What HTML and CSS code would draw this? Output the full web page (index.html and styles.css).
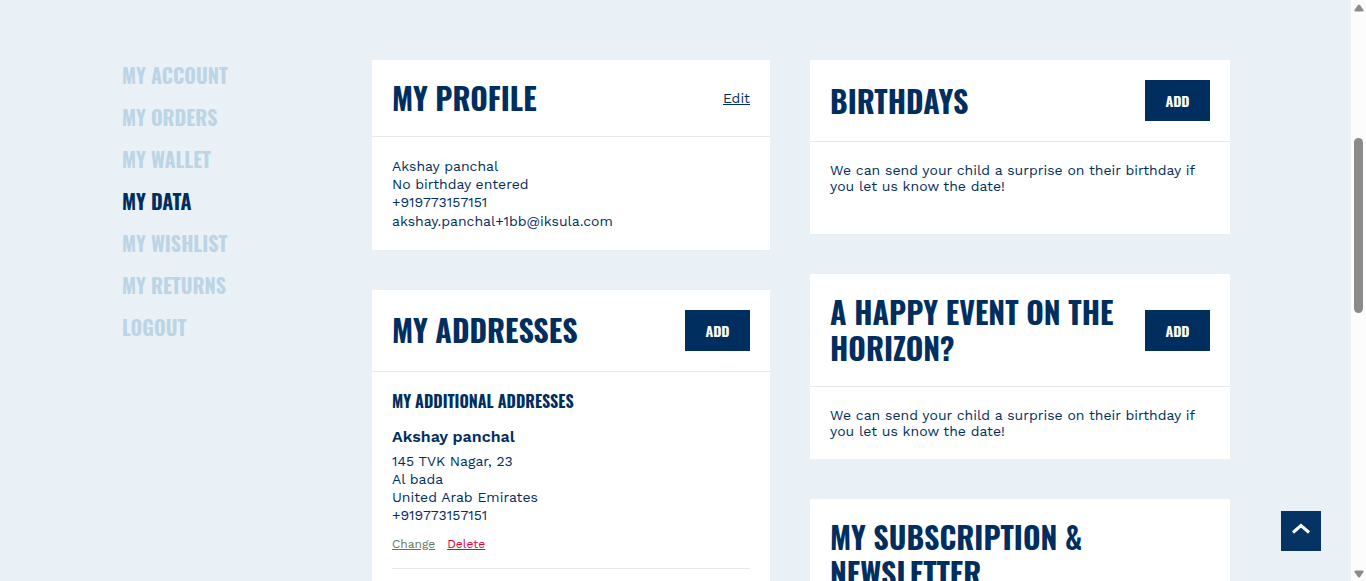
FILE: index.html
```
<!DOCTYPE html>
<html lang="en">
<head>
<meta charset="utf-8">
<meta name="viewport" content="width=device-width, initial-scale=1">
<title>My data</title>
<link rel="stylesheet" href="styles.css">
</head>
<body>
<div class="window">
  <div class="page">
    <div class="account">
      <nav class="menu" aria-label="Account">
        <a href="#account">My account</a>
        <a href="#orders">My orders</a>
        <a href="#wallet">My wallet</a>
        <a class="active" href="#data" aria-current="page">My data</a>
        <a href="#wishlist">My wishlist</a>
        <a href="#returns">My returns</a>
        <a href="#logout">Logout</a>
      </nav>
      <main class="columns">
        <div class="column">
          <section class="card">
            <header class="card-head">
              <h2>My profile</h2>
              <a class="edit" href="#edit">Edit</a>
            </header>
            <div class="card-body details">
              <div>Akshay panchal</div>
              <div>No birthday entered</div>
              <div>+919773157151</div>
              <div>akshay.panchal+1bb@iksula.com</div>
            </div>
          </section>
          <section class="card">
            <header class="card-head">
              <h2>My addresses</h2>
              <button class="add" type="button">Add</button>
            </header>
            <div class="card-body">
              <h3>My additional addresses</h3>
              <div class="address">
                <h4>Akshay panchal</h4>
                <div class="details">
                  <div>145 TVK Nagar, 23</div>
                  <div>Al bada</div>
                  <div>United Arab Emirates</div>
                  <div>+919773157151</div>
                </div>
                <div class="actions">
                  <a class="change" href="#change">Change</a>
                  <a class="delete" href="#delete">Delete</a>
                </div>
              </div>
            </div>
          </section>
        </div>
        <div class="column">
          <section class="card">
            <header class="card-head">
              <h2>Birthdays</h2>
              <button class="add" type="button">Add</button>
            </header>
            <div class="card-body birthdays">
              <p>We can send your child a surprise on their birthday if<br>you let us know the date!</p>
            </div>
          </section>
          <section class="card">
            <header class="card-head">
              <h2>A happy event on the<br>horizon?</h2>
              <button class="add" type="button">Add</button>
            </header>
            <div class="card-body">
              <p>We can send your child a surprise on their birthday if<br>you let us know the date!</p>
            </div>
          </section>
          <section class="card">
            <header class="card-head">
              <h2>My subscription &amp;<br>newsletter</h2>
            </header>
          </section>
        </div>
      </main>
    </div>
    <button class="to-top" type="button" aria-label="Back to top">
      <svg width="20" height="14" viewBox="0 0 20 14" fill="none" stroke="#fff" stroke-width="3"><path d="M2 10.500 10 3.500l8 7"/></svg>
    </button>
  </div>
  <div class="scrollbar" aria-hidden="true">
    <svg width="10" height="8" viewBox="0 0 10 8"><path d="M4 1Q5 0 6 1L9.500 6Q10 7.500 8.500 7.500H1.500Q0 7.500.5 6Z" fill="#8b8b8b"/></svg>
    <div class="track"><div class="thumb"></div></div>
    <svg width="10" height="8" viewBox="0 0 10 8"><path d="M4 7Q5 8 6 7L9.500 2Q10 .5 8.500.5H1.500Q0 .5.5 2Z" fill="#8b8b8b"/></svg>
  </div>
</div>
</body>
</html>
```
FILE: styles.css
```
* { box-sizing: border-box; }

body {
  margin: 0;
  background: #e9f1f7;
  color: #002e5f;
  font: 14px/18px "Work Sans", Inter, "Liberation Sans", sans-serif;
}

h2, h3, h4, p { margin: 0; }

.window {
  display: flex;
  height: 100vh;
  overflow: hidden;
}

.page {
  position: relative;
  flex: 1;
  min-width: 0;
  overflow: hidden;
}

.account {
  display: grid;
  grid-template-columns: 250px minmax(0, 1fr);
  padding: 60px 121px 0 122px;
}

.menu, h2, h3, .add {
  font-family: Oswald, "Roboto Condensed", "Liberation Sans Narrow", "Liberation Sans", sans-serif;
  font-weight: 700;
  text-transform: uppercase;
}

.menu {
  display: flex;
  flex-direction: column;
  align-items: flex-start;
  gap: 12px;
  font-size: 20px;
  line-height: 30px;
}

.menu a {
  color: #bcd5e6;
  text-decoration: none;
}

.menu .active { color: #002e5f; }

.columns {
  display: grid;
  grid-template-columns: 398fr 420fr;
  align-items: start;
  gap: 40px;
}

.column {
  display: flex;
  flex-direction: column;
  gap: 40px;
}

.card { background: #fff; }

.card-head {
  display: flex;
  align-items: center;
  justify-content: space-between;
  padding: 20px;
  border-bottom: 1px solid #e8e8e8;
}

h2 {
  font-size: 30px;
  line-height: 36px;
  white-space: nowrap;
}

.card-body { padding: 20px; }

.card-body p { line-height: 16px; }

.card-body.birthdays { padding-bottom: 40px; }

.details { line-height: 1.3; }

.edit { color: #002e5f; }

.add {
  width: 65px;
  height: 41px;
  padding: 0;
  border: 0;
  background: #002e5f;
  color: #fff;
  font-size: 14px;
}

h3 {
  margin-bottom: 18px;
  font-size: 16px;
  line-height: 18px;
}

h4 {
  margin-bottom: 6px;
  font-size: 16px;
  font-weight: 600;
  line-height: 18px;
}

.address {
  padding-bottom: 15px;
  border-bottom: 1px solid #e8e8e8;
}

.actions {
  display: flex;
  gap: 12px;
  margin-top: 10px;
  font-size: 12px;
}

.change { color: #60795f; }
.delete { color: #e4003a; }

.to-top {
  position: absolute;
  right: 30px;
  bottom: 30px;
  display: grid;
  place-items: center;
  width: 40px;
  height: 40px;
  padding: 0 0 4px;
  border: 0;
  background: #053363;
}

.scrollbar {
  display: flex;
  flex-direction: column;
  align-items: center;
  width: 15px;
  padding: 4px 0 3px;
  background: #fcfcfc;
}

.track {
  flex: 1;
  padding-top: 126px;
}

.thumb {
  width: 9px;
  height: 175px;
  border-radius: 5px;
  background: #8b8b8b;
}
```
